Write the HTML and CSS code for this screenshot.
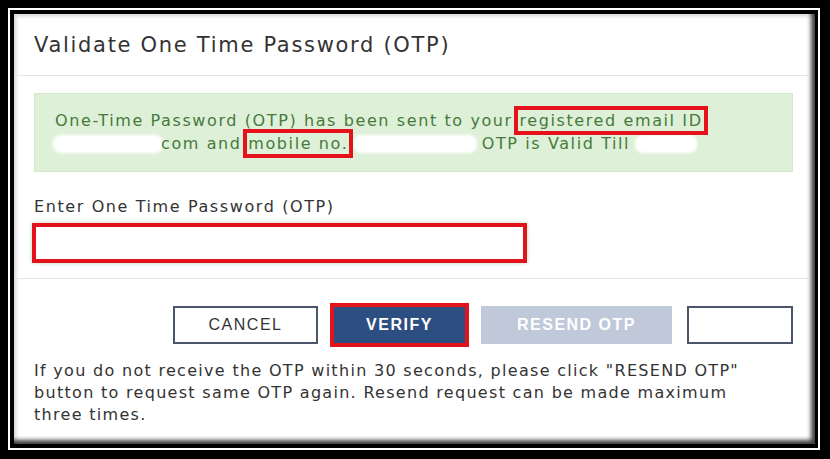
FILE: index.html
```html
<!DOCTYPE html>
<html>
<head>
  <title>Validate One Time Password (OTP)</title>
  <link rel="stylesheet" href="styles.css">
</head>
<body>
  <div class="frame">
    <div class="dialog">
      <div class="dialog-header">
        <h1 class="dialog-title">Validate One Time Password (OTP)</h1>
      </div>

      <div class="dialog-body">
        <div class="alert-success">
          One-Time Password (OTP) has been sent to your <span class="mark">registered email ID</span><br>
          <span class="mask mask-email"></span>com and <span class="mark">mobile no.</span> <span class="mask mask-mobile"></span> OTP is Valid Till <span class="mask mask-time"></span>
        </div>

        <label class="field-label" for="otp">Enter One Time Password (OTP)</label>
        <input type="text" id="otp" class="otp-input">
      </div>

      <div class="dialog-footer">
        <div class="btn-row">
          <button class="btn btn-default btn-cancel">CANCEL</button>
          <button class="btn btn-primary btn-verify">VERIFY</button>
          <button class="btn btn-disabled btn-resend">RESEND OTP</button>
          <button class="btn btn-default btn-blank"></button>
        </div>
        <p class="note">If you do not receive the OTP within 30 seconds, please click "RESEND OTP" button to request same OTP again. Resend request can be made maximum three times.</p>
      </div>
    </div>
  </div>
</body>
</html>
```

FILE: styles.css
```css
:root {
  --text-color: #333333;
  --line-color: #e5e5e5;
  --alert-bg: #dff0d8;
  --alert-border: #d6e9c6;
  --alert-text: #467a3c;
  --mark-color: #e3121b; /* annotation red */
  --primary: #2c4e80;
  --disabled: #c0c9d9;
  --btn-border: #4b566a;
}

* {
  box-sizing: border-box;
}

body {
  margin: 0;
  width: 830px;
  height: 459px;
  background: #000000;
  font-family: 'DejaVu Sans', Verdana, sans-serif;
  color: var(--text-color);
  overflow: hidden;
}

/* white outline round the screenshot */
.frame {
  margin: 8px;
  width: 812px;
  height: 442px;
  border: 2px solid #ffffff;
  padding: 4px 3px 4px 4px;
}

.dialog {
  height: 100%;
  background: #ffffff;
  display: flex;
  flex-direction: column;
  box-shadow: inset -5px -5px 4px -1px rgba(0, 0, 0, 0.75),
              inset 3px 3px 4px -1px rgba(0, 0, 0, 0.18);
}

.dialog-header {
  padding: 19px 17px 18px 20px;
  border-bottom: 1px solid var(--line-color);
  margin-right: 5px;
}

.dialog-title {
  margin: 0;
  font-size: 21px;
  font-weight: normal;
  line-height: 24px;
  letter-spacing: 1.7px;
}

.dialog-body {
  padding: 17px 17px 15px 20px;
  border-bottom: 1px solid var(--line-color);
  margin-right: 5px;
}

.alert-success {
  background: var(--alert-bg);
  border: 1px solid var(--alert-border);
  color: var(--alert-text);
  padding: 15px 20px 16px;
  font-size: 16px;
  line-height: 23px;
  letter-spacing: 1.6px;
}

.mark {
  outline: 4px solid var(--mark-color);
  outline-offset: 1px;
}

/* redacted values */
.mask {
  display: inline-block;
  height: 14px;
  background: #ffffff;
  border-radius: 6px;
  box-shadow: 0 0 3px 2px #ffffff;
  vertical-align: -2px;
}
.mask-email { width: 106px; }
.mask-mobile { width: 120px; }
.mask-time { width: 58px; }

.field-label {
  display: block;
  margin-top: 25px;
  margin-bottom: 6px;
  font-size: 16px;
  line-height: 20px;
  letter-spacing: 1.6px;
}

.otp-input {
  display: block;
  width: 495px;
  height: 40px;
  margin-left: -2px;
  border: 4px solid var(--mark-color);
  background: #ffffff;
  box-shadow: 0 0 4px rgba(90, 170, 90, 0.45);
  font-size: 16px;
  padding: 4px 8px;
  outline: none;
}

.dialog-footer {
  padding: 27px 22px 0 20px;
}

.btn-row {
  display: flex;
  justify-content: flex-end;
  gap: 15px;
}

.btn {
  height: 38px;
  padding: 0;
  font-family: 'Liberation Sans', Arial, sans-serif;
  font-size: 16px;
  letter-spacing: 1.5px;
  border: 2px solid transparent;
  cursor: pointer;
}

.btn-default {
  background: #ffffff;
  color: #333333;
  border-color: var(--btn-border);
}

.btn-primary {
  background: var(--primary);
  color: #ffffff;
  font-weight: bold;
  border: none;
  outline: 4px solid var(--mark-color);
  outline-offset: -1px;
}

.btn-disabled {
  background: var(--disabled);
  color: #ffffff;
  font-weight: bold;
  border: none;
  cursor: not-allowed;
}

.btn-cancel { width: 145px; }
.btn-verify { width: 133px; }
.btn-resend { width: 191px; }
.btn-blank { width: 106px; }

.note {
  margin: 16px 0 0;
  max-width: 735px;
  font-size: 16px;
  line-height: 22px;
  letter-spacing: 1.3px;
}
```
